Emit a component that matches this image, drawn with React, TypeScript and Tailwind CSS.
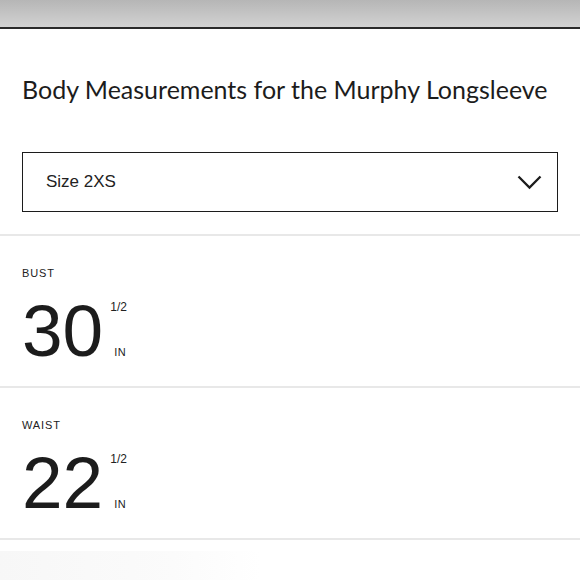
type Measure = { label: string; whole: string; frac: string };

const measures: Measure[] = [
  { label: "Bust", whole: "30", frac: "1/2" },
  { label: "Waist", whole: "22", frac: "1/2" },
];

function MeasureRow({ m }: { m: Measure }) {
  return (
    <div className="border-b-2 border-[#e8e8e8] px-[22px] pt-[30px] h-[152px]">
      <div className="text-[11px] uppercase tracking-[0.08em] text-[#222] font-['Liberation_Sans',sans-serif] leading-[14px]">
        {m.label}
      </div>
      <div className="flex items-start mt-[15px]">
        <span className="text-[73px] leading-[72px] text-[#1c1c1c] font-['Liberation_Sans',sans-serif]">
          {m.whole}
        </span>
        <div className="flex flex-col justify-between h-[57px] mt-[6px] ml-[7px] font-['Liberation_Sans',sans-serif] text-[#222]">
          <span className="text-[12px] leading-[13px]">{m.frac}</span>
          <span className="text-[11px] leading-[12px] pl-[4px] tracking-[0.05em]">IN</span>
        </div>
      </div>
    </div>
  );
}

export default function App() {
  return (
    <div className="w-[580px] h-[580px] overflow-hidden bg-white">
      <div className="h-[27px] bg-gradient-to-b from-[#b6b6b6] to-[#d2d2d2]" />
      <div className="h-[2px] bg-[#2a2a2a]" />

      <div className="px-[22px] pt-[45px]">
        <h1 className="text-[25px] leading-[30px] text-[#1c1c1c] font-['Lato',sans-serif]">
          Body Measurements for the Murphy Longsleeve
        </h1>

        <button className="mt-[48px] w-[536px] h-[60px] border-[1.5px] border-[#1c1c1c] flex items-center justify-between pl-[23px] pr-[15px] text-left">
          <span className="text-[17px] text-[#222] font-['Liberation_Sans',sans-serif]">Size 2XS</span>
          <svg width="25" height="15" viewBox="0 0 25 15" fill="none" stroke="#1c1c1c" strokeWidth="2.3">
            <polyline points="1.5,1.5 12.5,12.5 23.5,1.5" />
          </svg>
        </button>
      </div>

      <div className="mt-[22px] border-b-2 border-[#e8e8e8]" />

      {measures.map((m) => (
        <MeasureRow key={m.label} m={m} />
      ))}

      <div className="mt-[11px] h-[30px] bg-gradient-to-r from-[#f7f7f7] via-[#fbfbfb] via-30% to-white to-45%" />
    </div>
  );
}
